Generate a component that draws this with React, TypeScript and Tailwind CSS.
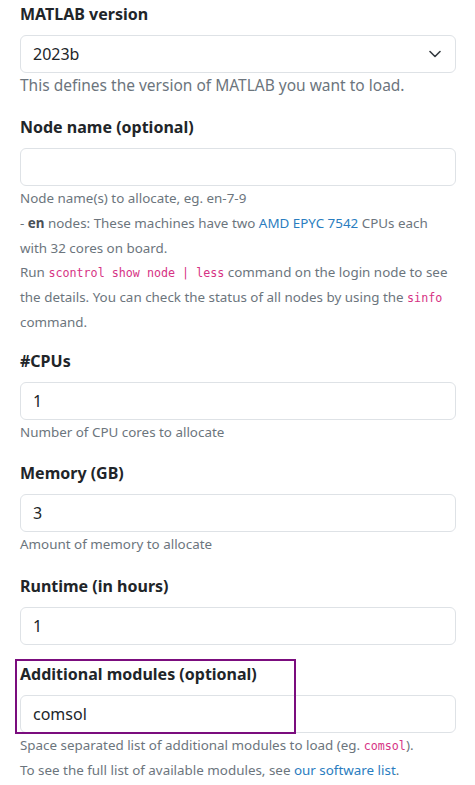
const font = { fontFamily: '"Noto Sans", "Open Sans", sans-serif' };

const Code = ({ children }: { children: string }) => (
  <code className="text-[11.7px] leading-none text-[#d63384] font-['DejaVu_Sans_Mono',monospace]">
    {children}
  </code>
);

const Label = ({ children }: { children: string }) => (
  <label className="block text-base font-bold leading-6 text-[#212529] mb-[9px]">
    {children}
  </label>
);

const Field = ({ value }: { value: string }) => (
  <input
    readOnly
    value={value}
    className="block w-full h-[38px] px-3 text-base text-[#212529] bg-white border border-[#dee2e6] rounded-md outline-none"
  />
);

const Help = ({ children }: { children: React.ReactNode }) => (
  <div className="text-[13.4px] leading-[24.8px] text-[#6c757d]">{children}</div>
);

export default function App() {
  return (
    <div className="bg-white min-h-screen pl-5 pr-[19px] pt-[2px]" style={font}>
      {/* MATLAB version */}
      <div className="mb-[18px]">
        <Label>MATLAB version</Label>
        <div className="relative">
          <select className="block w-full h-[38px] pl-3 pr-9 text-base text-[#212529] bg-white border border-[#dee2e6] rounded-md appearance-none outline-none">
            <option>2023b</option>
          </select>
          <svg
            className="absolute right-[15px] top-[15px] pointer-events-none"
            width="12"
            height="8"
            viewBox="0 0 12 8"
            fill="none"
          >
            <path d="M1 1.5 6 6.5 11 1.5" stroke="#343a40" strokeWidth="1.6" strokeLinecap="round" strokeLinejoin="round" />
          </svg>
        </div>
        <div className="text-[15.5px] leading-6 text-[#6c757d]">
          This defines the version of MATLAB you want to load.
        </div>
      </div>

      {/* Node name */}
      <div className="mb-[14px]">
        <Label>Node name (optional)</Label>
        <Field value="" />
        <Help>
          Node name(s) to allocate, eg. en-7-9
          <br />- <b className="text-[#495057]">en</b> nodes: These machines have two{" "}
          <a className="text-[#2a7dc0]">AMD EPYC 7542</a> CPUs each with 32 cores on board.
          <br />
          Run <Code>scontrol show node | less</Code> command on the login node to see the
          details. You can check the status of all nodes by using the <Code>sinfo</Code>{" "}
          command.
        </Help>
      </div>

      {/* CPUs */}
      <div className="mb-[16px]">
        <Label>#CPUs</Label>
        <Field value="1" />
        <Help>Number of CPU cores to allocate</Help>
      </div>

      {/* Memory */}
      <div className="mb-[18px]">
        <Label>Memory (GB)</Label>
        <Field value="3" />
        <Help>Amount of memory to allocate</Help>
      </div>

      {/* Runtime */}
      <div className="mb-[17px]">
        <Label>Runtime (in hours)</Label>
        <Field value="1" />
      </div>

      {/* Additional modules */}
      <div className="relative">
        <div className="absolute -left-[5px] -top-[3px] w-[281px] h-[75px] border-2 border-[#7b0d7e] pointer-events-none" />
        <Label>Additional modules (optional)</Label>
        <Field value="comsol" />
        <Help>
          Space separated list of additional modules to load (eg. <Code>comsol</Code>).
          <br />
          To see the full list of available modules, see{" "}
          <a className="text-[#2a7dc0]">our software list</a>.
        </Help>
      </div>
    </div>
  );
}
